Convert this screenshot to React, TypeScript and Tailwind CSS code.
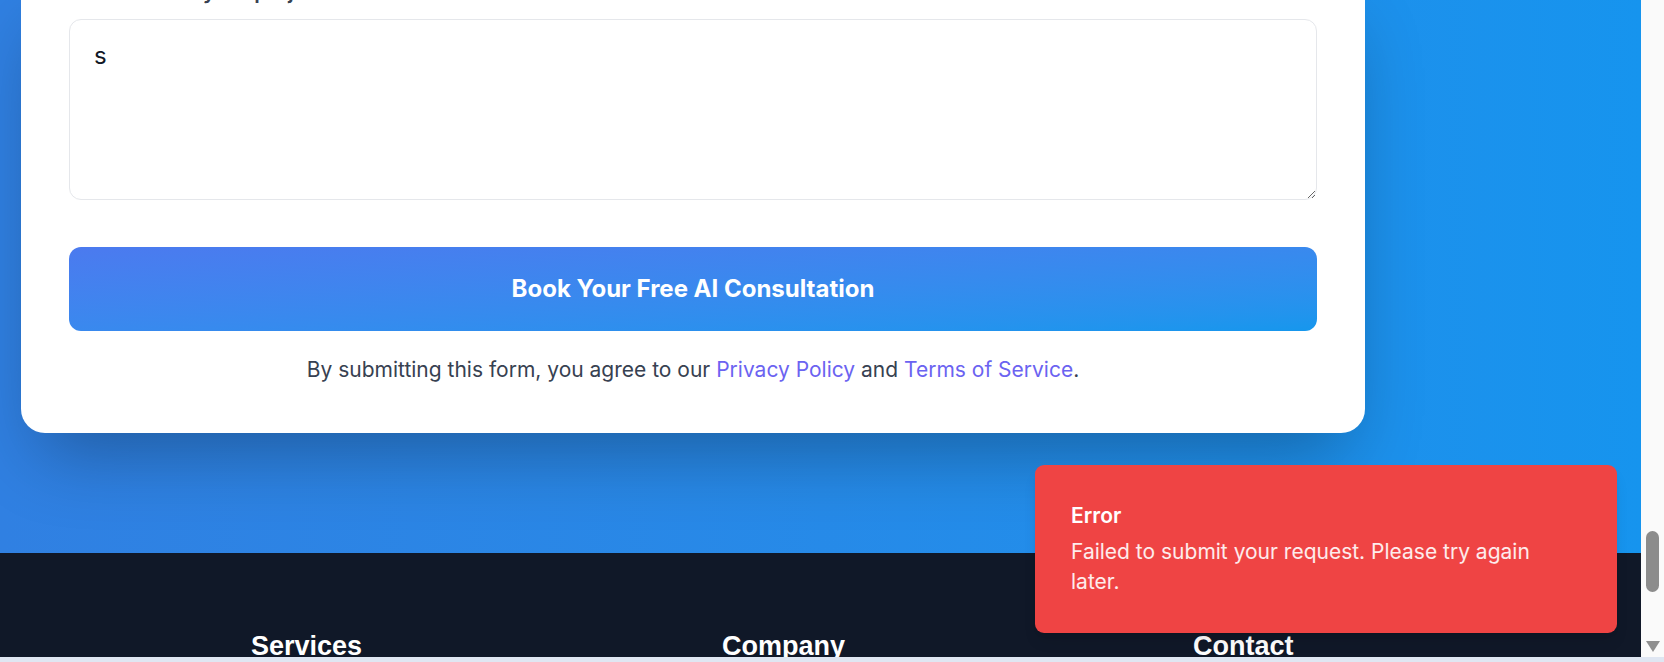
import { useState } from "react";

const footerColumns = ["Services", "Company", "Contact"];

function Scrollbar() {
  return (
    <div className="flex w-[23px] flex-col items-center bg-[#fafafa]">
      <div className="mt-[531px] h-[61px] w-[13px] rounded-full bg-[#8c8c8c]" />
      <svg className="mb-[5px] mt-auto" width="14" height="11" viewBox="0 0 14 11">
        <polygon points="0,0 14,0 7,11" fill="#8f8f8f" />
      </svg>
    </div>
  );
}

function Toast() {
  return (
    <div className="absolute bottom-[24px] right-[24px] w-[582px] rounded-[9px] bg-[#ef4444] py-[36px] pl-[36px] pr-[48px] shadow-lg">
      <div className="text-[21px] leading-[30px] font-semibold text-white">Error</div>
      <div className="mt-[6px] text-[21px] leading-[30px] text-white/90">
        Failed to submit your request. Please try again later.
      </div>
    </div>
  );
}

export default function App() {
  const [message, setMessage] = useState("s");

  return (
    <div className="flex h-[662px] w-[1664px] flex-col overflow-hidden font-['Inter',sans-serif]">
      <div className="flex h-[657px]">
        <div className="relative flex-1 overflow-hidden">
          {/* Booking form section */}
          <section className="bg-linear-to-r from-[#3080e2] to-[#1694ee] pb-[120px]">
            <div className="-mt-[23px] ml-[21px] w-[1344px] rounded-[24px] bg-white px-[48px] pb-[48px] shadow-[0_37px_75px_-18px_rgba(0,0,0,0.3)]">
              <label
                htmlFor="project-details"
                className="mb-[12px] block text-[21px] leading-[30px] font-semibold text-[#374151]"
              >
                Tell us about your project
              </label>
              <textarea
                id="project-details"
                rows={4}
                value={message}
                onChange={(e) => setMessage(e.target.value)}
                className="block h-[181px] w-full resize-y rounded-[12px] border border-[#e5e7eb] px-[24px] py-[18px] text-[24px] leading-[36px] text-[#111827] outline-none"
              />
              <button className="mt-[47px] h-[84px] w-full rounded-[12px] bg-linear-to-br from-[#4b7aef] to-[#1597ed] text-[24px] font-bold text-white">
                Book Your Free AI Consultation
              </button>
              <p className="mt-[24px] text-center text-[21px] leading-[30px] text-[#374151]">
                By submitting this form, you agree to our{" "}
                <a className="text-[#6b63f1]">Privacy Policy</a> and{" "}
                <a className="text-[#6b63f1]">Terms of Service</a>.
              </p>
            </div>
          </section>

          {/* Footer */}
          <footer className="bg-[#101828] pt-[72px] pb-[72px]">
            <div className="ml-[251px] grid grid-cols-[471px_471px_471px]">
              {footerColumns.map((title) => (
                <h3
                  key={title}
                  className="font-['Liberation_Sans',sans-serif] text-[27px] leading-[42px] font-bold text-white"
                >
                  {title}
                </h3>
              ))}
            </div>
          </footer>

          <Toast />
        </div>
        <Scrollbar />
      </div>
      <div className="h-[5px] bg-[#dfe6f2]" />
    </div>
  );
}
